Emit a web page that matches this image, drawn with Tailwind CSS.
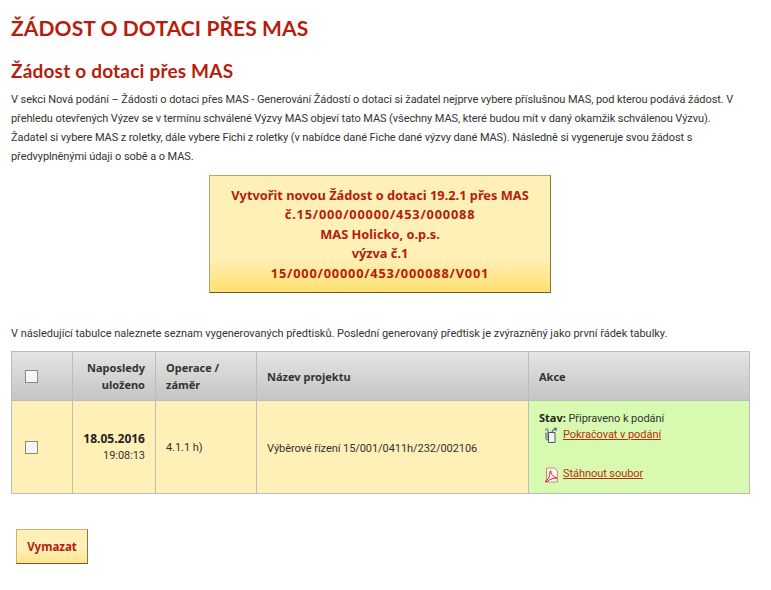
<!DOCTYPE html>
<html lang="cs">
<head>
<meta charset="utf-8">
<script src="https://cdn.jsdelivr.net/npm/@tailwindcss/browser@4"></script>
<title>Žádost o dotaci přes MAS</title>
</head>
<body class="bg-white font-['Roboto','Liberation_Sans',sans-serif] text-[11px] tracking-[-0.06px] text-[#333] w-[771px] h-[590px] overflow-hidden">
<main class="pl-[11px] w-[750px]">
  <h1 class="pt-[14px] h-[58px] font-['Lato',sans-serif] font-bold text-[21px] tracking-[0.1px] leading-[28px] text-[#b71c0c]">ŽÁDOST O DOTACI PŘES MAS</h1>
  <h2 class="h-[30px] font-['Lato',sans-serif] font-bold text-[19px] tracking-[0.2px] leading-[26px] text-[#b71c0c]">Žádost o dotaci přes MAS</h2>
  <p class="pt-[2px] leading-[19px] tracking-[-0.08px] w-[735px]">V sekci Nová podání – Žádosti o dotaci přes MAS - Generování Žádostí o dotaci si žadatel nejprve vybere příslušnou MAS, pod kterou podává žádost. V přehledu otevřených Výzev se v termínu schválené Výzvy MAS objeví tato MAS (všechny MAS, které budou mít v daný okamžik schválenou Výzvu). Žadatel si vybere MAS z roletky, dále vybere Fichi z roletky (v nabídce dané Fiche dané výzvy dané MAS). Následně si vygeneruje svou žádost s předvyplněnými údaji o sobě a o MAS.</p>
  <div class="mt-[9px] ml-[198px] w-[342px] h-[118px] pt-[10px] border border-[#b9a667] border-b-[#6b5a2a] border-r-[#8a7638] bg-[linear-gradient(#fff0b8_0%,#fff0b8_70%,#ffe070_100%)] text-center font-['Noto_Sans',sans-serif] font-bold text-[12.8px] tracking-normal leading-[19.4px] text-[#b71c0c]">
    <div>Vytvořit novou Žádost o dotaci 19.2.1 přes MAS</div>
    <div class="tracking-[0.8px]">č.15/000/00000/453/000088</div>
    <div>MAS Holicko, o.p.s.</div>
    <div>výzva č.1</div>
    <div class="tracking-[0.8px]">15/000/00000/453/000088/V001</div>
  </div>
  <p class="mt-[31px] leading-[19px] tracking-[-0.02px]">V následující tabulce naleznete seznam vygenerovaných předtisků. Poslední generovaný předtisk je zvýrazněný jako první řádek tabulky.</p>
  <table class="mt-[8px] w-[738px] table-fixed border-collapse">
    <colgroup><col class="w-[61px]"><col class="w-[83px]"><col class="w-[101px]"><col class="w-[272px]"><col class="w-[221px]"></colgroup>
    <thead>
      <tr class="h-[49px] bg-[linear-gradient(#e4e4e4,#c4c4c4)] font-['Noto_Sans',sans-serif] text-[11px] tracking-normal leading-[17px] text-[#333] font-bold">
        <th class="border border-[#bcbcbc] pl-[13px] text-left"><span class="block w-[13px] h-[13px] border border-[#888] bg-[#f6f6f6]"></span></th>
        <th class="border border-[#bcbcbc] px-[10px] text-right font-bold">Naposledy uloženo</th>
        <th class="border border-[#bcbcbc] px-[10px] text-left font-bold">Operace / záměr</th>
        <th class="border border-[#bcbcbc] px-[10px] text-left font-bold">Název projektu</th>
        <th class="border border-[#bcbcbc] px-[10px] text-left font-bold">Akce</th>
      </tr>
    </thead>
    <tbody>
      <tr class="h-[93px] bg-[#fff0b8]">
        <td class="border border-[#bcbcbc] pl-[13px]"><span class="block w-[13px] h-[13px] border border-[#888] bg-[#f6f6f6]"></span></td>
        <td class="border border-[#bcbcbc] px-[10px] text-right leading-[17px]"><div class="font-['Noto_Sans',sans-serif] font-bold text-[12px] tracking-normal text-[#222]">18.05.2016</div><div>19:08:13</div></td>
        <td class="border border-[#bcbcbc] px-[10px] pt-[3px]">4.1.1 h)</td>
        <td class="border border-[#bcbcbc] px-[10px] pt-[5px]">Výběrové řízení 15/001/0411h/232/002106</td>
        <td class="border border-[#bcbcbc] bg-[#d8fab0] px-[10px] pt-[9px] align-top">
          <div class="leading-[16px]"><b class="font-['Noto_Sans',sans-serif] tracking-normal text-[#222]">Stav:</b> Připraveno k podání</div>
          <a href="#" class="ml-[5px] flex items-center gap-[5px] h-[17px] text-[#b7300e] underline">
            <svg class="w-[14px] h-[17px] shrink-0" viewBox="0 0 14 17" fill="none"><path d="M4.500 5.500h6.500v10h-6.500z" fill="#f2f3f8" stroke="#4a5470"/><path d="M1.500 3.500c0-2.500 2.500-2.500 2.500 0v8c0 2-2 2-2 0v-6" stroke="#4a5470"/><path d="M8 5c.5-2 2-3 4-3.500m-2-.5 2.500.5-1 2.500" stroke="#3f73b8" stroke-width="1.200"/></svg>
            Pokračovat v podání</a>
          <a href="#" class="mt-[22px] ml-[5px] flex items-center gap-[4px] h-[17px] text-[#b7300e] underline">
            <svg class="w-[15px] h-[16px] shrink-0" viewBox="0 0 15 16" fill="none"><path d="M2.500 1h8l3 3v11h-11z" fill="#fff6f0" stroke="#c98a8a"/><path d="M1 14.500c3-1 5-6 5-10 0-1 1-1 1 0 0 3 3 6 6 6.500-3 0-7 1-9 3-1 1-2 1-3 .5z" stroke="#d11f1f"/></svg>
            Stáhnout soubor</a>
        </td>
      </tr>
    </tbody>
  </table>
  <button class="block mt-[35px] ml-[5px] w-[72px] h-[35px] border border-[#c9b56f] border-b-[#6b5a2a] border-r-[#8a7638] bg-[linear-gradient(#fff0b8_0%,#fff0b8_60%,#ffe38a_100%)] font-['Noto_Sans',sans-serif] font-bold text-[11.5px] tracking-normal text-[#b71c0c]">Vymazat</button>
</main>
</body>
</html>
